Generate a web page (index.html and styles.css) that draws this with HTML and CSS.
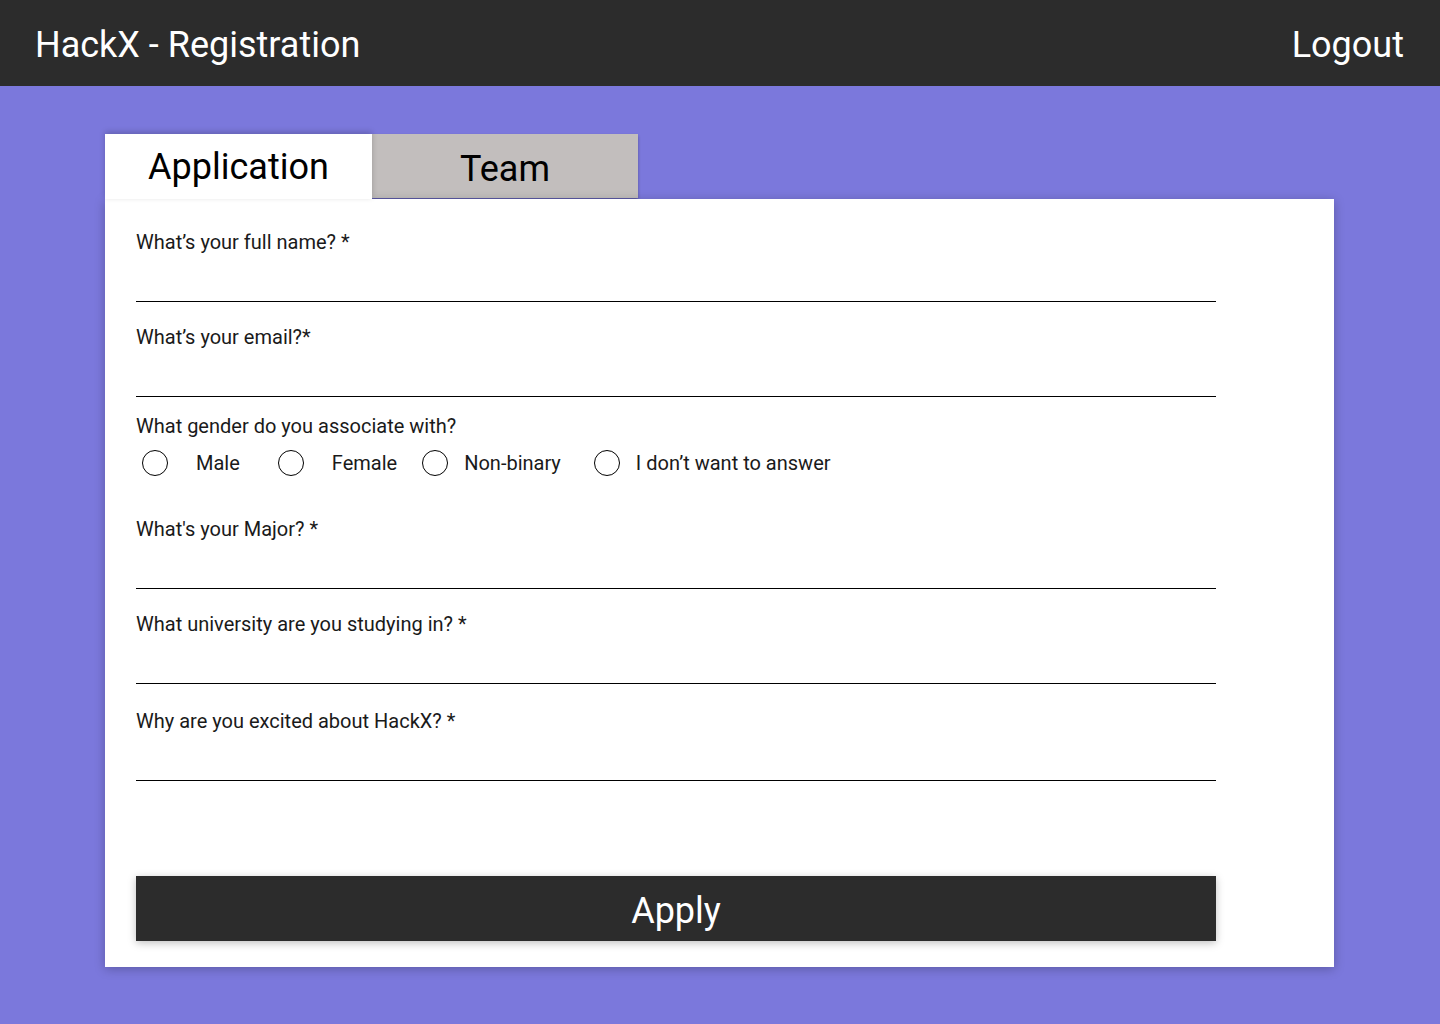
FILE: index.html
```html
<!DOCTYPE html>
<html lang="en">
<head>
<meta charset="utf-8">
<title>HackX - Registration</title>
<link rel="stylesheet" href="styles.css">
</head>
<body>
<header class="topbar">
  <h1 class="brand">HackX - Registration</h1>
  <a class="logout" href="#">Logout</a>
</header>
<main class="page">
  <div class="tabs">
    <div class="tab tab-active">Application</div>
    <div class="tab tab-inactive">Team</div>
  </div>
  <form class="card">
    <div class="field">
      <label class="label">What’s your full name? *</label>
      <div class="input"></div>
    </div>
    <div class="field">
      <label class="label">What’s your email?*</label>
      <div class="input"></div>
    </div>
    <div class="field field-radio">
      <div class="label">What gender do you associate with?</div>
      <div class="radios">
        <span class="opt opt-wide"><span class="circle"></span><span>Male</span></span>
        <span class="opt opt-wide opt-2"><span class="circle"></span><span>Female</span></span>
        <span class="opt opt-3"><span class="circle"></span><span>Non-binary</span></span>
        <span class="opt opt-4"><span class="circle"></span><span>I don’t want to answer</span></span>
      </div>
    </div>
    <div class="field">
      <label class="label">What's your Major? *</label>
      <div class="input"></div>
    </div>
    <div class="field">
      <label class="label">What university are you studying in? *</label>
      <div class="input"></div>
    </div>
    <div class="field field-last">
      <label class="label">Why are you excited about HackX? *</label>
      <div class="input"></div>
    </div>
    <button type="button" class="apply">Apply</button>
  </form>
</main>
</body>
</html>
```

FILE: styles.css
```css
* { box-sizing: border-box; }
html, body { margin: 0; padding: 0; }
body {
  background: #7b78dc;
  font-family: Roboto, "Liberation Sans", sans-serif;
  color: #000;
  min-height: 1024px;
}
.topbar {
  height: 86px;
  background: #2c2c2c;
  display: flex;
  align-items: center;
  justify-content: space-between;
  padding: 4px 36px 0 35px;
}
.brand {
  margin: 0;
  font-weight: 400;
  font-size: 36px;
  color: #fff;
}
.logout {
  color: #fff;
  font-size: 36px;
  text-decoration: none;
}
.page {
  padding: 48px 106px 0 105px;
}
.tabs {
  display: flex;
  height: 65px;
}
.tab {
  height: 65px;
  display: flex;
  align-items: center;
  justify-content: center;
  font-size: 36px;
}
.tab-active {
  width: 267px;
  background: #fff;
  box-shadow: 0 -2px 6px rgba(0,0,0,0.2);
  position: relative;
  z-index: 2;
}
.tab-inactive {
  width: 266px;
  height: 64px;
  background: #c2bebd;
  box-shadow: 0 2px 3px rgba(0,0,0,0.3);
  padding-top: 6px;
}
.card {
  display: block;
  background: #fff;
  width: 1229px;
  padding: 31px 118px 26px 31px;
  box-shadow: 0 2px 10px rgba(0,0,0,0.25);
  position: relative;
  z-index: 1;
}
.field {
  display: flex;
  flex-direction: column;
  margin-bottom: 23px;
}
.field-radio { margin-top: -6px; margin-bottom: 39px; }
.field-last { padding-top: 2px; margin-bottom: 95px; }
.label {
  font-size: 20px;
  line-height: 24px;
  color: #1a1a1a;
}
.input {
  height: 48px;
  border-bottom: 1px solid #000;
}
.radios {
  display: flex;
  align-items: center;
  height: 30px;
  margin-top: 10px;
  padding-left: 6px;
  font-size: 20px;
  color: #1a1a1a;
}
.opt {
  display: flex;
  align-items: center;
  gap: 16px;
}
.opt-wide { gap: 28px; }
.opt-2 { margin-left: 38px; }
.opt-3 { margin-left: 25px; }
.opt-4 { margin-left: 33px; }
.circle {
  width: 26px;
  height: 26px;
  border: 1px solid #000;
  border-radius: 50%;
  flex: none;
}
.apply {
  display: block;
  width: 1080px;
  height: 65px;
  border: none;
  background: #2c2c2c;
  color: #fff;
  font-family: Roboto, "Liberation Sans", sans-serif;
  font-size: 36px;
  box-shadow: 0 2px 8px rgba(0,0,0,0.25);
  padding: 4px 0 0;
}
```
